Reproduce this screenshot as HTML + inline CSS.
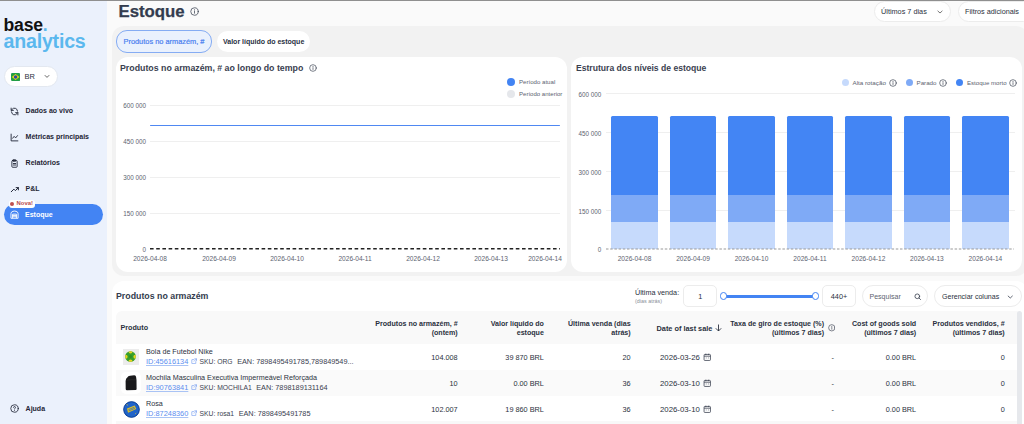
<!DOCTYPE html>
<html><head><meta charset="utf-8">
<style>
*{box-sizing:border-box;margin:0;padding:0}
html,body{width:1024px;height:424px;overflow:hidden;background:#fafafa;font-family:"Liberation Sans",sans-serif;color:#2b3140}
.a{position:absolute;white-space:nowrap}
#topline{position:absolute;left:0;top:0;width:1024px;height:1px;background:#8f8f8f}
#side{position:absolute;left:0;top:1px;width:107px;height:423px;background:#ebf1fc}
.nav{position:absolute;left:0;width:107px;height:20px}
.nav .t{position:absolute;left:25.6px;top:6px;font-size:7px;line-height:8px;font-weight:700;color:#1f2535}
.nav svg{position:absolute;left:10px;top:6px}
.pill{position:absolute;background:#fff;border:1px solid #ececec;border-radius:12px}
.card{position:absolute;background:#fff;border-radius:12px}
.gl{position:absolute;height:1px;background:#efefef}
.yl{position:absolute;font-size:6.3px;line-height:7px;color:#5d6370;text-align:right;width:40px}
.xl{position:absolute;font-size:6.6px;line-height:7px;color:#5d6370;text-align:center;width:50px}
.bar{position:absolute;width:46px}
.th{position:absolute;font-size:7.1px;line-height:9px;font-weight:700;color:#2b3140;text-align:right}
.td{position:absolute;font-size:7.3px;line-height:8px;color:#2b3140;text-align:right}
</style></head><body>
<div id="topline"></div>
<div id="side">
  <div class="a" style="left:3.5px;top:15.5px;font-size:17.6px;line-height:17px;font-weight:700;color:#111;letter-spacing:-0.2px">base<span style="color:#5bb8ee">.</span></div>
  <div class="a" style="left:3.5px;top:31px;font-size:19.6px;line-height:19px;font-weight:700;color:#5bb8ee;letter-spacing:-0.2px">analytics</div>
  <div class="pill" style="left:4.3px;top:64.6px;width:53.6px;height:21.4px;border-color:#e3e8f0"></div>
  <svg class="a" style="left:10.9px;top:71.5px" width="9.2" height="8" viewBox="0 0 9.2 8"><rect width="9.2" height="8" rx="1.3" fill="#229e45"/><path d="M4.6 0.9 L8.4 4 L4.6 7.1 L0.8 4Z" fill="#f1dc12"/><circle cx="4.6" cy="4" r="1.8" fill="#2b49a3"/></svg>
  <div class="a" style="left:24.5px;top:71.8px;font-size:7.5px;line-height:8px;color:#2b3140">BR</div>
  <svg class="a" style="left:44px;top:73px" width="6" height="5" viewBox="0 0 6 5"><path d="M0.8 1.2 L3 3.4 L5.2 1.2" fill="none" stroke="#555" stroke-width="0.9"/></svg>

  <div class="nav" style="top:100px"><svg width="9" height="9" viewBox="0 0 24 24" fill="none" stroke="#1f2535" stroke-width="2.4" stroke-linecap="round" stroke-linejoin="round"><path d="M20 11A8 8 0 0 0 5.5 6.5L3 9"/><path d="M3 3v6h6"/><path d="M4 13a8 8 0 0 0 14.5 4.5L21 15"/><path d="M21 21v-6h-6"/></svg><div class="t">Dados ao vivo</div></div>
  <div class="nav" style="top:126px"><svg width="9" height="9" viewBox="0 0 24 24" fill="none" stroke="#1f2535" stroke-width="2.4" stroke-linecap="round" stroke-linejoin="round"><path d="M3 3v18h18"/><path d="M7 14l4-5 4 4 5-6"/></svg><div class="t">Métricas principais</div></div>
  <div class="nav" style="top:152px"><svg width="9" height="9" viewBox="0 0 24 24" fill="none" stroke="#1f2535" stroke-width="2.4" stroke-linecap="round" stroke-linejoin="round"><rect x="5" y="4" width="14" height="18" rx="2"/><path d="M9 2h6v4H9z"/><path d="M9 12h6M9 16h6"/></svg><div class="t">Relatórios</div></div>
  <div class="nav" style="top:178px"><svg width="10" height="9" viewBox="0 0 24 24" fill="none" stroke="#1f2535" stroke-width="2.6" stroke-linecap="round" stroke-linejoin="round"><path d="M2 18l7-7 4 4 8-8"/><path d="M15 7h6v6"/></svg><div class="t">P&amp;L</div></div>

  <div class="a" style="left:3.8px;top:202.8px;width:99.2px;height:21.7px;border-radius:11px;background:#4384f3"></div>
  <div class="a" style="left:9px;top:199px;width:26px;height:7.8px;border-radius:3px;background:#fff"></div>
  <div class="a" style="left:10.3px;top:200.6px;width:4.2px;height:4.2px;border-radius:50%;background:#c0504d"></div>
  <div class="a" style="left:16.6px;top:199.3px;font-size:5.9px;line-height:7px;font-weight:700;color:#b84a4a">Nova!</div>
  <svg class="a" style="left:10px;top:209.3px" width="9" height="9" viewBox="0 0 24 24" fill="none" stroke="#fff" stroke-width="2.4" stroke-linejoin="round" stroke-linecap="round"><path d="M2.5 21V9.5Q2.5 5 8 3.5Q12 2.3 16 3.5Q21.5 5 21.5 9.5V21Z"/><path d="M7 21V11h10v10"/><path d="M7 14.5h10M7 18h10"/></svg>
  <div class="a" style="left:25px;top:210px;font-size:7px;line-height:8px;font-weight:700;color:#fff">Estoque</div>

  <svg class="a" style="left:10px;top:403px" width="9" height="9" viewBox="0 0 24 24" fill="none" stroke="#1f2535" stroke-width="2.2" stroke-linecap="round"><circle cx="12" cy="12" r="10"/><path d="M9.5 9a2.5 2.5 0 0 1 5 0.5c0 1.8-2.5 2-2.5 4"/><path d="M12 17.5h.01"/></svg>
  <div class="a" style="left:25.6px;top:404px;font-size:7px;line-height:8px;font-weight:700;color:#1f2535">Ajuda</div>
</div>

<!-- header -->
<div class="a" style="left:118.5px;top:2.3px;font-size:16.8px;line-height:20px;font-weight:700;color:#333c4e;-webkit-text-stroke:0.25px #333c4e">Estoque</div>
<svg class="a" style="left:190px;top:7px" width="9" height="9" viewBox="0 0 24 24" fill="none" stroke="#3a4150" stroke-width="2" stroke-linecap="round"><circle cx="12" cy="12" r="10"/><path d="M12 11v5.5"/><path d="M12 7.6h.01" stroke-width="2.6"/></svg>
<div class="pill" style="left:874.4px;top:1px;width:76.4px;height:20.8px"></div>
<div class="a" style="left:881px;top:8px;font-size:7.3px;line-height:8px;color:#2b3140">Últimos 7 dias</div>
<svg class="a" style="left:937px;top:10px" width="6" height="4" viewBox="0 0 6 4"><path d="M0.6 0.8 L3 3 L5.4 0.8" fill="none" stroke="#555" stroke-width="0.8"/></svg>
<div class="pill" style="left:958.2px;top:1px;width:76px;height:20.8px"></div>
<div class="a" style="left:965px;top:8px;font-size:7.25px;line-height:8px;color:#2b3140">Filtros adicionais</div>

<!-- gray container -->
<div class="a" style="left:112px;top:26px;width:916px;height:250.2px;border-radius:12px;background:#f2f2f2"></div>
<div class="a" style="left:116px;top:30.4px;width:95.8px;height:22.2px;border-radius:11px;background:#eaf1fd;border:1px solid #85acf3"></div>
<div class="a" style="left:123.5px;top:37.7px;font-size:7.4px;line-height:8px;color:#4a7ff0;-webkit-text-stroke:0.2px #4a7ff0">Produtos no armazém, #</div>
<div class="a" style="left:217px;top:31px;width:93px;height:21px;border-radius:11px;background:#fff"></div>
<div class="a" style="left:223px;top:37.7px;font-size:7px;line-height:8px;font-weight:700;color:#283042">Valor líquido do estoque</div>

<!-- chart 1 -->
<div class="card" style="left:116px;top:57px;width:451px;height:215px"></div>
<div class="a" style="left:120px;top:63px;font-size:8.8px;line-height:10px;font-weight:700;color:#3a4150">Produtos no armazém, # ao longo do tempo</div>
<svg class="a" style="left:309px;top:64px" width="8" height="8" viewBox="0 0 24 24" fill="none" stroke="#3a4150" stroke-width="2" stroke-linecap="round"><circle cx="12" cy="12" r="10"/><path d="M12 11v5.5"/><path d="M12 7.6h.01" stroke-width="2.6"/></svg>
<div class="a" style="left:507px;top:78px;width:8px;height:8px;border-radius:4px;background:#4384f3"></div>
<div class="a" style="left:519px;top:78px;font-size:6.1px;line-height:8px;color:#5d6370">Período atual</div>
<div class="a" style="left:507px;top:90px;width:8px;height:8px;border-radius:4px;background:#e5e7eb"></div>
<div class="a" style="left:519px;top:90px;font-size:6.05px;line-height:8px;color:#5d6370">Período anterior</div>
<div class="gl" style="left:150px;top:105px;width:410px"></div>
<div class="gl" style="left:150px;top:141px;width:410px"></div>
<div class="gl" style="left:150px;top:177px;width:410px"></div>
<div class="gl" style="left:150px;top:213px;width:410px"></div>
<div class="yl" style="left:106px;top:102.2px">600 000</div>
<div class="yl" style="left:106px;top:138.2px">450 000</div>
<div class="yl" style="left:106px;top:174.2px">300 000</div>
<div class="yl" style="left:106px;top:210.2px">150 000</div>
<div class="yl" style="left:106px;top:246.2px">0</div>
<div class="a" style="left:150.3px;top:125.1px;width:410px;height:1.4px;background:#4f88f2;border-radius:1px"></div>
<svg class="a" style="left:150px;top:246px" width="412" height="6"><line x1="0" y1="2.8" x2="410" y2="2.8" stroke="#222" stroke-width="1.6" stroke-dasharray="3.6 2.6"/></svg>
<div class="xl" style="left:125px;top:255px">2026-04-08</div>
<div class="xl" style="left:194px;top:255px">2026-04-09</div>
<div class="xl" style="left:262px;top:255px">2026-04-10</div>
<div class="xl" style="left:330px;top:255px">2026-04-11</div>
<div class="xl" style="left:398px;top:255px">2026-04-12</div>
<div class="xl" style="left:466px;top:255px">2026-04-13</div>
<div class="xl" style="left:520px;top:255px">2026-04-14</div>

<!-- chart 2 -->
<div class="card" style="left:571px;top:57px;width:451px;height:215px"></div>
<div class="a" style="left:576px;top:63px;font-size:8.6px;line-height:10px;font-weight:700;color:#3a4150">Estrutura dos níveis de estoque</div>
<div class="a" style="left:842px;top:79px;width:7px;height:7px;border-radius:4px;background:#c6dafc"></div>
<div class="a" style="left:852.5px;top:78.5px;font-size:6.26px;line-height:8px;color:#5d6370">Alta rotação</div>
<svg class="a" style="left:889px;top:78.5px" width="8" height="8" viewBox="0 0 24 24" fill="none" stroke="#3a4150" stroke-width="2" stroke-linecap="round"><circle cx="12" cy="12" r="10"/><path d="M12 11v5.5"/><path d="M12 7.6h.01" stroke-width="2.6"/></svg>
<div class="a" style="left:905.5px;top:79px;width:7px;height:7px;border-radius:4px;background:#7faaf6"></div>
<div class="a" style="left:916.5px;top:78.5px;font-size:6.2px;line-height:8px;color:#5d6370">Parado</div>
<svg class="a" style="left:939px;top:78.5px" width="8" height="8" viewBox="0 0 24 24" fill="none" stroke="#3a4150" stroke-width="2" stroke-linecap="round"><circle cx="12" cy="12" r="10"/><path d="M12 11v5.5"/><path d="M12 7.6h.01" stroke-width="2.6"/></svg>
<div class="a" style="left:955.5px;top:79px;width:7px;height:7px;border-radius:4px;background:#4385f4"></div>
<div class="a" style="left:967px;top:78.5px;font-size:6.09px;line-height:8px;color:#5d6370">Estoque morto</div>
<svg class="a" style="left:1009px;top:78.5px" width="8" height="8" viewBox="0 0 24 24" fill="none" stroke="#3a4150" stroke-width="2" stroke-linecap="round"><circle cx="12" cy="12" r="10"/><path d="M12 11v5.5"/><path d="M12 7.6h.01" stroke-width="2.6"/></svg>
<div class="gl" style="left:605.5px;top:93px;width:409px"></div>
<div class="gl" style="left:605.5px;top:132px;width:409px"></div>
<div class="gl" style="left:605.5px;top:171px;width:409px"></div>
<div class="gl" style="left:605.5px;top:210px;width:409px"></div>
<div class="yl" style="left:561.2px;top:91.2px">600 000</div>
<div class="yl" style="left:561.2px;top:130.2px">450 000</div>
<div class="yl" style="left:561.2px;top:169.2px">300 000</div>
<div class="yl" style="left:561.2px;top:208.2px">150 000</div>
<div class="yl" style="left:561.2px;top:246.2px">0</div>
<div class="a" style="left:611.40px;top:116px;width:46.3px;height:79px;background:#4385f4;border-radius:1.5px 1.5px 0 0"></div>
<div class="a" style="left:611.40px;top:195px;width:46.3px;height:27px;background:#7faaf6"></div>
<div class="a" style="left:611.40px;top:222px;width:46.3px;height:27px;background:#c6dafc"></div>
<div class="xl" style="left:609.55px;top:255px">2026-04-08</div>
<div class="a" style="left:669.88px;top:116px;width:46.3px;height:79px;background:#4385f4;border-radius:1.5px 1.5px 0 0"></div>
<div class="a" style="left:669.88px;top:195px;width:46.3px;height:27px;background:#7faaf6"></div>
<div class="a" style="left:669.88px;top:222px;width:46.3px;height:27px;background:#c6dafc"></div>
<div class="xl" style="left:668.03px;top:255px">2026-04-09</div>
<div class="a" style="left:728.36px;top:116px;width:46.3px;height:79px;background:#4385f4;border-radius:1.5px 1.5px 0 0"></div>
<div class="a" style="left:728.36px;top:195px;width:46.3px;height:27px;background:#7faaf6"></div>
<div class="a" style="left:728.36px;top:222px;width:46.3px;height:27px;background:#c6dafc"></div>
<div class="xl" style="left:726.51px;top:255px">2026-04-10</div>
<div class="a" style="left:786.84px;top:116px;width:46.3px;height:79px;background:#4385f4;border-radius:1.5px 1.5px 0 0"></div>
<div class="a" style="left:786.84px;top:195px;width:46.3px;height:27px;background:#7faaf6"></div>
<div class="a" style="left:786.84px;top:222px;width:46.3px;height:27px;background:#c6dafc"></div>
<div class="xl" style="left:784.99px;top:255px">2026-04-11</div>
<div class="a" style="left:845.32px;top:116px;width:46.3px;height:79px;background:#4385f4;border-radius:1.5px 1.5px 0 0"></div>
<div class="a" style="left:845.32px;top:195px;width:46.3px;height:27px;background:#7faaf6"></div>
<div class="a" style="left:845.32px;top:222px;width:46.3px;height:27px;background:#c6dafc"></div>
<div class="xl" style="left:843.47px;top:255px">2026-04-12</div>
<div class="a" style="left:903.80px;top:116px;width:46.3px;height:79px;background:#4385f4;border-radius:1.5px 1.5px 0 0"></div>
<div class="a" style="left:903.80px;top:195px;width:46.3px;height:27px;background:#7faaf6"></div>
<div class="a" style="left:903.80px;top:222px;width:46.3px;height:27px;background:#c6dafc"></div>
<div class="xl" style="left:901.95px;top:255px">2026-04-13</div>
<div class="a" style="left:962.28px;top:116px;width:46.3px;height:79px;background:#4385f4;border-radius:1.5px 1.5px 0 0"></div>
<div class="a" style="left:962.28px;top:195px;width:46.3px;height:27px;background:#7faaf6"></div>
<div class="a" style="left:962.28px;top:222px;width:46.3px;height:27px;background:#c6dafc"></div>
<div class="xl" style="left:960.43px;top:255px">2026-04-14</div>
<svg class="a" style="left:606px;top:246px" width="410" height="6"><line x1="0" y1="3" x2="408" y2="3" stroke="#9a9a9a" stroke-width="1.1" stroke-dasharray="2.5 1.7"/></svg>

<!-- table section -->
<div class="card" style="left:112px;top:281px;width:916px;height:160px;border-radius:12px"></div>
<div class="a" style="left:116px;top:290.9px;font-size:8.8px;line-height:10px;font-weight:700;color:#333c4e">Produtos no armazém</div>
<div class="a" style="left:635px;top:288.8px;font-size:7.23px;line-height:8px;color:#2b3140">Última venda:</div>
<div class="a" style="left:635px;top:297.5px;font-size:5.4px;line-height:7px;color:#8a8f99">(dias atrás)</div>
<div class="a" style="left:683.2px;top:285.2px;width:34.2px;height:21.5px;border:1px solid #ececec;border-radius:5px;background:#fff"></div>
<div class="a" style="left:683.2px;top:292.8px;width:34.2px;text-align:center;font-size:7.3px;line-height:8px;color:#2b3140">1</div>
<div class="a" style="left:723.5px;top:294.5px;width:92px;height:3px;background:#4384f3"></div>
<div class="a" style="left:719.9px;top:292.2px;width:7.5px;height:7.5px;border-radius:50%;background:#fff;border:1.6px solid #4384f3"></div>
<div class="a" style="left:811.5px;top:292.2px;width:7.5px;height:7.5px;border-radius:50%;background:#fff;border:1.6px solid #4384f3"></div>
<div class="a" style="left:822px;top:285.2px;width:34px;height:21.5px;border:1px solid #ececec;border-radius:5px;background:#fff"></div>
<div class="a" style="left:822px;top:292.8px;width:34px;text-align:center;font-size:7.3px;line-height:8px;color:#2b3140">440+</div>
<div class="pill" style="left:862px;top:285.1px;width:66px;height:21.8px;border-radius:11px"></div>
<div class="a" style="left:869.5px;top:292.8px;font-size:7.04px;line-height:8px;color:#5d6370">Pesquisar</div>
<svg class="a" style="left:913.5px;top:292.5px" width="7.5" height="7.5" viewBox="0 0 24 24" fill="none" stroke="#3a4150" stroke-width="2.6" stroke-linecap="round"><circle cx="10.5" cy="10.5" r="7.5"/><path d="M16 16l5 5"/></svg>
<div class="pill" style="left:934.3px;top:285.1px;width:87.5px;height:21.8px;border-radius:11px"></div>
<div class="a" style="left:942px;top:292.8px;font-size:7.06px;line-height:8px;color:#2b3140">Gerenciar colunas</div>
<svg class="a" style="left:1007px;top:294.5px" width="6.5" height="4" viewBox="0 0 6 4"><path d="M0.6 0.8 L3 3 L5.4 0.8" fill="none" stroke="#3a4150" stroke-width="0.8"/></svg>

<div class="a" style="left:116px;top:311px;width:902px;height:33px;background:#f9f9f9;border-radius:6px 0 0 0"></div>
<div class="a" style="left:116px;top:370px;width:902px;height:25.5px;background:#fafafa"></div>
<div class="a" style="left:116px;top:421px;width:902px;height:3px;background:#f8f8f8"></div>
<div class="a" style="left:1017px;top:311px;width:4.5px;height:113px;background:#e6e8ec;border-radius:3px 3px 0 0"></div>

<div class="a" style="left:120.5px;top:322.7px;font-size:7.2px;line-height:9px;font-weight:700;color:#2b3140">Produto</div>
<div class="th" style="left:300px;width:157.7px;top:319.5px">Produtos no armazém, #<br>(ontem)</div>
<div class="th" style="left:440px;width:103.9px;top:319.5px">Valor líquido do<br>estoque</div>
<div class="th" style="left:530px;width:100.7px;top:319.5px">Última venda (dias<br>atrás)</div>
<div class="a" style="left:656.5px;top:323.5px;font-size:7.35px;line-height:9px;font-weight:700;color:#2b3140">Date of last sale</div>
<svg class="a" style="left:715px;top:324px" width="7" height="8" viewBox="0 0 7 8"><path d="M3.5 0.5v6.5M0.8 4.3L3.5 7 6.2 4.3" fill="none" stroke="#2b3140" stroke-width="0.9"/></svg>
<div class="th" style="left:700px;width:124px;top:319.5px">Taxa de giro de estoque (%)<br>(últimos 7 dias)</div>
<svg class="a" style="left:827.5px;top:324px" width="7.6" height="7.6" viewBox="0 0 24 24" fill="none" stroke="#3a4150" stroke-width="2" stroke-linecap="round"><circle cx="12" cy="12" r="10"/><path d="M12 11v5.5"/><path d="M12 7.6h.01" stroke-width="2.6"/></svg>
<div class="th" style="left:820px;width:96.2px;top:319.5px">Cost of goods sold<br>(últimos 7 dias)</div>
<div class="th" style="left:900px;width:104.7px;top:319.5px">Produtos vendidos, #<br>(últimos 7 dias)</div>
<div class="a" style="left:146px;top:347.5px;font-size:7.2px;line-height:8px;color:#2b3140">Bola de Futebol Nike</div>
<div class="a" style="left:146px;top:357.5px;font-size:7.2px;line-height:8px;color:#3a4150"><span style="font-size:7.4px;color:#5b8def;text-decoration:underline;text-decoration-color:#a9c3f5;text-decoration-thickness:0.7px;text-underline-offset:0.8px">ID:45616134</span><svg style="margin-left:2.3px;vertical-align:-0.3px" width="6.4" height="6.4" viewBox="0 0 24 24" fill="none" stroke="#6b96ef" stroke-width="2.3" stroke-linecap="round" stroke-linejoin="round"><path d="M14 3h7v7"/><path d="M21 3l-9 9"/><path d="M18 13.5V20a1 1 0 0 1-1 1H4a1 1 0 0 1-1-1V7a1 1 0 0 1 1-1h6.5"/></svg><span style="margin-left:2.5px;font-size:6.75px">SKU: ORG</span><span style="margin-left:4.6px;font-size:7.3px">EAN: 7898495491785,789849549...</span></div>
<div class="td" style="left:380px;width:77.7px;top:353.7px">104.008</div>
<div class="td" style="left:460px;width:83.9px;top:353.7px">39 870 BRL</div>
<div class="td" style="left:560px;width:70.7px;top:353.7px">20</div>
<div class="a" style="left:660px;top:353.7px;font-size:7.8px;line-height:8px;color:#2b3140">2026-03-26</div>
<svg class="a" style="left:703.3px;top:352.7px" width="8.5" height="8.5" viewBox="0 0 24 24" fill="none" stroke="#3a4150" stroke-width="2.2"><rect x="3" y="4" width="18" height="17" rx="2"/><path d="M3 9h18M8 2v4M16 2v4M8 14h2M14 14h2"/></svg>
<div class="td" style="left:800px;width:34px;top:353.7px">-</div>
<div class="td" style="left:850px;width:66.2px;top:353.7px">0.00 BRL</div>
<div class="td" style="left:950px;width:54.7px;top:353.7px">0</div>
<div class="a" style="left:146px;top:373.5px;font-size:7.2px;line-height:8px;color:#2b3140">Mochila Masculina Executiva Impermeável Reforçada</div>
<div class="a" style="left:146px;top:383.5px;font-size:7.2px;line-height:8px;color:#3a4150"><span style="font-size:7.4px;color:#5b8def;text-decoration:underline;text-decoration-color:#a9c3f5;text-decoration-thickness:0.7px;text-underline-offset:0.8px">ID:90763841</span><svg style="margin-left:2.3px;vertical-align:-0.3px" width="6.4" height="6.4" viewBox="0 0 24 24" fill="none" stroke="#6b96ef" stroke-width="2.3" stroke-linecap="round" stroke-linejoin="round"><path d="M14 3h7v7"/><path d="M21 3l-9 9"/><path d="M18 13.5V20a1 1 0 0 1-1 1H4a1 1 0 0 1-1-1V7a1 1 0 0 1 1-1h6.5"/></svg><span style="margin-left:2.5px;font-size:6.75px">SKU: MOCHILA1</span><span style="margin-left:4.6px;font-size:7.3px">EAN: 7898189131164</span></div>
<div class="td" style="left:380px;width:77.7px;top:379.7px">10</div>
<div class="td" style="left:460px;width:83.9px;top:379.7px">0.00 BRL</div>
<div class="td" style="left:560px;width:70.7px;top:379.7px">36</div>
<div class="a" style="left:660px;top:379.7px;font-size:7.8px;line-height:8px;color:#2b3140">2026-03-10</div>
<svg class="a" style="left:703.3px;top:378.7px" width="8.5" height="8.5" viewBox="0 0 24 24" fill="none" stroke="#3a4150" stroke-width="2.2"><rect x="3" y="4" width="18" height="17" rx="2"/><path d="M3 9h18M8 2v4M16 2v4M8 14h2M14 14h2"/></svg>
<div class="td" style="left:800px;width:34px;top:379.7px">-</div>
<div class="td" style="left:850px;width:66.2px;top:379.7px">0.00 BRL</div>
<div class="td" style="left:950px;width:54.7px;top:379.7px">0</div>
<div class="a" style="left:146px;top:399.5px;font-size:7.2px;line-height:8px;color:#2b3140">Rosa</div>
<div class="a" style="left:146px;top:409.5px;font-size:7.2px;line-height:8px;color:#3a4150"><span style="font-size:7.4px;color:#5b8def;text-decoration:underline;text-decoration-color:#a9c3f5;text-decoration-thickness:0.7px;text-underline-offset:0.8px">ID:87248360</span><svg style="margin-left:2.3px;vertical-align:-0.3px" width="6.4" height="6.4" viewBox="0 0 24 24" fill="none" stroke="#6b96ef" stroke-width="2.3" stroke-linecap="round" stroke-linejoin="round"><path d="M14 3h7v7"/><path d="M21 3l-9 9"/><path d="M18 13.5V20a1 1 0 0 1-1 1H4a1 1 0 0 1-1-1V7a1 1 0 0 1 1-1h6.5"/></svg><span style="margin-left:2.5px;font-size:6.75px">SKU: rosa1</span><span style="margin-left:4.6px;font-size:7.3px">EAN: 7898495491785</span></div>
<div class="td" style="left:380px;width:77.7px;top:405.7px">102.007</div>
<div class="td" style="left:460px;width:83.9px;top:405.7px">19 860 BRL</div>
<div class="td" style="left:560px;width:70.7px;top:405.7px">36</div>
<div class="a" style="left:660px;top:405.7px;font-size:7.8px;line-height:8px;color:#2b3140">2026-03-10</div>
<svg class="a" style="left:703.3px;top:404.7px" width="8.5" height="8.5" viewBox="0 0 24 24" fill="none" stroke="#3a4150" stroke-width="2.2"><rect x="3" y="4" width="18" height="17" rx="2"/><path d="M3 9h18M8 2v4M16 2v4M8 14h2M14 14h2"/></svg>
<div class="td" style="left:800px;width:34px;top:405.7px">-</div>
<div class="td" style="left:850px;width:66.2px;top:405.7px">0.00 BRL</div>
<div class="td" style="left:950px;width:54.7px;top:405.7px">0</div>
<div class="a" style="left:122.7px;top:348.7px;width:16px;height:16px;background:#ececec"></div>
<svg class="a" style="left:125.2px;top:350.8px" width="11" height="11" viewBox="0 0 11 11"><defs><clipPath id="bc"><circle cx="5.5" cy="5.5" r="5.3"/></clipPath></defs><circle cx="5.5" cy="5.5" r="5.3" fill="#37a02b"/><g clip-path="url(#bc)" fill="#e9d521"><circle cx="5.5" cy="0.6" r="2"/><circle cx="0.6" cy="5.8" r="2"/><circle cx="10.4" cy="5.8" r="2"/><circle cx="5.5" cy="10.6" r="2"/></g><circle cx="5.5" cy="5.5" r="1.6" fill="#2e8f25"/></svg>
<div class="a" style="left:120.5px;top:372px;width:20.6px;height:21.6px;background:#fff;border-radius:5px"></div>
<svg class="a" style="left:124.5px;top:375px" width="12" height="16" viewBox="0 0 12 16"><path d="M2.3 2.6 Q3 1.1 5 0.8 L9.3 0.3 Q11 0.3 11.1 2 L11.5 5 L11.6 14 Q11.6 15.1 10.6 15.1 L2 15.2 Q0.7 15.2 0.7 14 L0.6 6 Q0.8 3.6 2.3 2.6Z" fill="#19191b"/><path d="M1.5 5.2 Q6 4.4 11 4.8" stroke="#333" stroke-width="0.5" fill="none"/></svg>
<svg class="a" style="left:122.5px;top:400.5px" width="17" height="17" viewBox="0 0 17 17"><circle cx="8.5" cy="8.5" r="8" fill="#1f63c9"/><circle cx="8.5" cy="8.5" r="7.8" fill="none" stroke="#0c3b8c" stroke-width="0.9"/><path d="M4.5 6.2 L12.8 5.8 L13.2 9.5 L4.2 10.5Z" fill="#e0c024" transform="rotate(-18 8.5 8.5)"/><path d="M5.5 7.7 L12 7.2 M5.4 9 L12.1 8.5" stroke="#1f63c9" stroke-width="0.6" transform="rotate(-18 8.5 8.5)"/><path d="M3.5 3.5 l1.5 0.8 M12 13 l1.2 -0.8" stroke="#e0c024" stroke-width="0.7"/></svg>
</body></html>
